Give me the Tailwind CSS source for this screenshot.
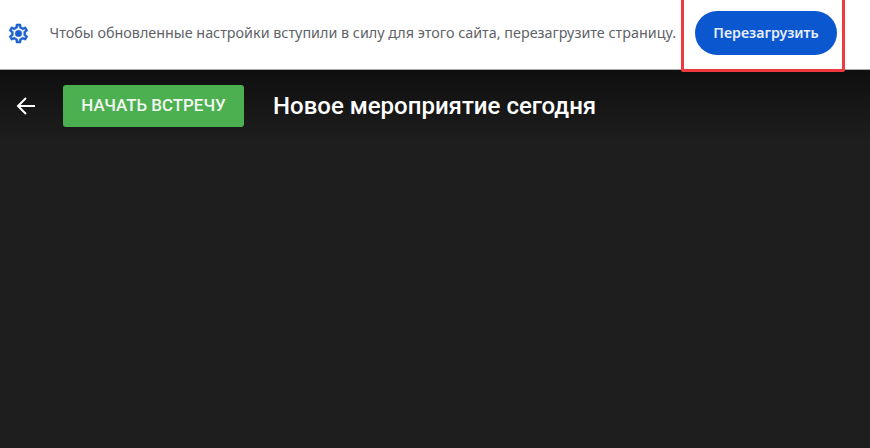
<!DOCTYPE html>
<html lang="ru">
<head>
    <meta charset="UTF-8">
    <meta name="viewport" content="width=device-width, initial-scale=1.0">
    <title>Новое мероприятие сегодня</title>
    <script src="https://cdn.jsdelivr.net/npm/@tailwindcss/browser@4"></script>
</head>
<body class="h-[448px] w-[870px] overflow-hidden bg-[#1e1e1e] font-['Roboto',sans-serif]">
    <!-- infobar -->
    <div class="relative flex h-[70px] items-center border-b border-[#a8a8a8] bg-white pb-[3px] pl-[7px]">
        <svg class="h-[23px] w-[23px] shrink-0" viewBox="0 0 24 24" fill="#1a5fd0" stroke="#1a5fd0" stroke-width="0.5">
            <path d="M19.43 12.98c.04-.32.07-.64.07-.98 0-.34-.03-.66-.07-.98l2.11-1.65c.19-.15.24-.42.12-.64l-2-3.46c-.09-.16-.26-.25-.44-.25-.06 0-.12.01-.17.03l-2.49 1c-.52-.4-1.08-.73-1.69-.98l-.38-2.65C14.46 2.18 14.25 2 14 2h-4c-.25 0-.46.18-.49.42l-.38 2.65c-.61.25-1.17.59-1.69.98l-2.49-1c-.06-.02-.12-.03-.18-.03-.17 0-.34.09-.43.25l-2 3.46c-.13.22-.07.49.12.64l2.11 1.65c-.04.32-.07.65-.07.98 0 .33.03.66.07.98l-2.11 1.65c-.19.15-.24.42-.12.64l2 3.46c.09.16.26.25.44.25.06 0 .12-.01.17-.03l2.49-1c.52.4 1.08.73 1.69.98l.38 2.65c.03.24.24.42.49.42h4c.25 0 .46-.18.49-.42l.38-2.65c.61-.25 1.17-.59 1.69-.98l2.49 1c.06.02.12.03.18.03.17 0 .34-.09.43-.25l2-3.46c.12-.22.07-.49-.12-.64l-2.11-1.65zm-1.98-1.71c.04.31.05.52.05.73 0 .21-.02.43-.05.73l-.14 1.13.89.7 1.08.84-.7 1.21-1.27-.51-1.04-.42-.9.68c-.43.32-.84.56-1.25.73l-1.06.43-.16 1.13-.2 1.35h-1.4l-.19-1.35-.16-1.13-1.06-.43c-.43-.18-.83-.41-1.23-.71l-.91-.7-1.06.43-1.27.51-.7-1.21 1.08-.84.89-.7-.14-1.13c-.03-.31-.05-.54-.05-.74s.02-.43.05-.73l.14-1.13-.89-.7-1.08-.84.7-1.21 1.27.51 1.04.42.9-.68c.43-.32.84-.56 1.25-.73l1.06-.43.16-1.13.2-1.35h1.39l.19 1.35.16 1.13 1.06.43c.43.18.83.41 1.23.71l.91.7 1.06-.43 1.27-.51.7 1.21-1.07.85-.89.7.14 1.13z"/>
            <circle cx="12" cy="12" r="3.4"/>
        </svg>
        <span class="ml-[19.5px] whitespace-nowrap font-['Noto_Sans',sans-serif] text-[14.35px] text-[#5f6368]">Чтобы обновленные настройки вступили в силу для этого сайта, перезагрузите страницу.</span>
        <button class="absolute left-[695px] top-[11px] flex h-[44px] w-[142px] items-center justify-center rounded-full bg-[#0b57d0] pb-[1px] font-['Noto_Sans',sans-serif] text-[14.2px] font-semibold text-[#e8eefc]">Перезагрузить</button>
        <!-- red annotation box -->
        <div class="absolute left-[681px] top-[-4px] h-[76px] w-[164px] rounded-[2px] border-[3px] border-[#ee3a3f]"></div>
    </div>
    <!-- toolbar -->
    <div class="flex h-[72px] items-center bg-gradient-to-b from-[#0f0f0f] to-[#1e1e1e] pb-[1px]">
        <svg class="ml-[16px] h-5 w-5 shrink-0" viewBox="0 0 20 20" fill="none" stroke="white" stroke-width="2">
            <path d="M19 10H2M10 2l-8 8 8 8"/>
        </svg>
        <button class="ml-[27px] flex h-[42px] w-[181px] items-center justify-center rounded-[3px] bg-[#4caf50] text-[16.9px] font-medium text-[#f1f8f1]">НАЧАТЬ ВСТРЕЧУ</button>
        <h1 class="ml-[29px] text-[24px] font-medium text-white">Новое мероприятие сегодня</h1>
    </div>
</body>
</html>
